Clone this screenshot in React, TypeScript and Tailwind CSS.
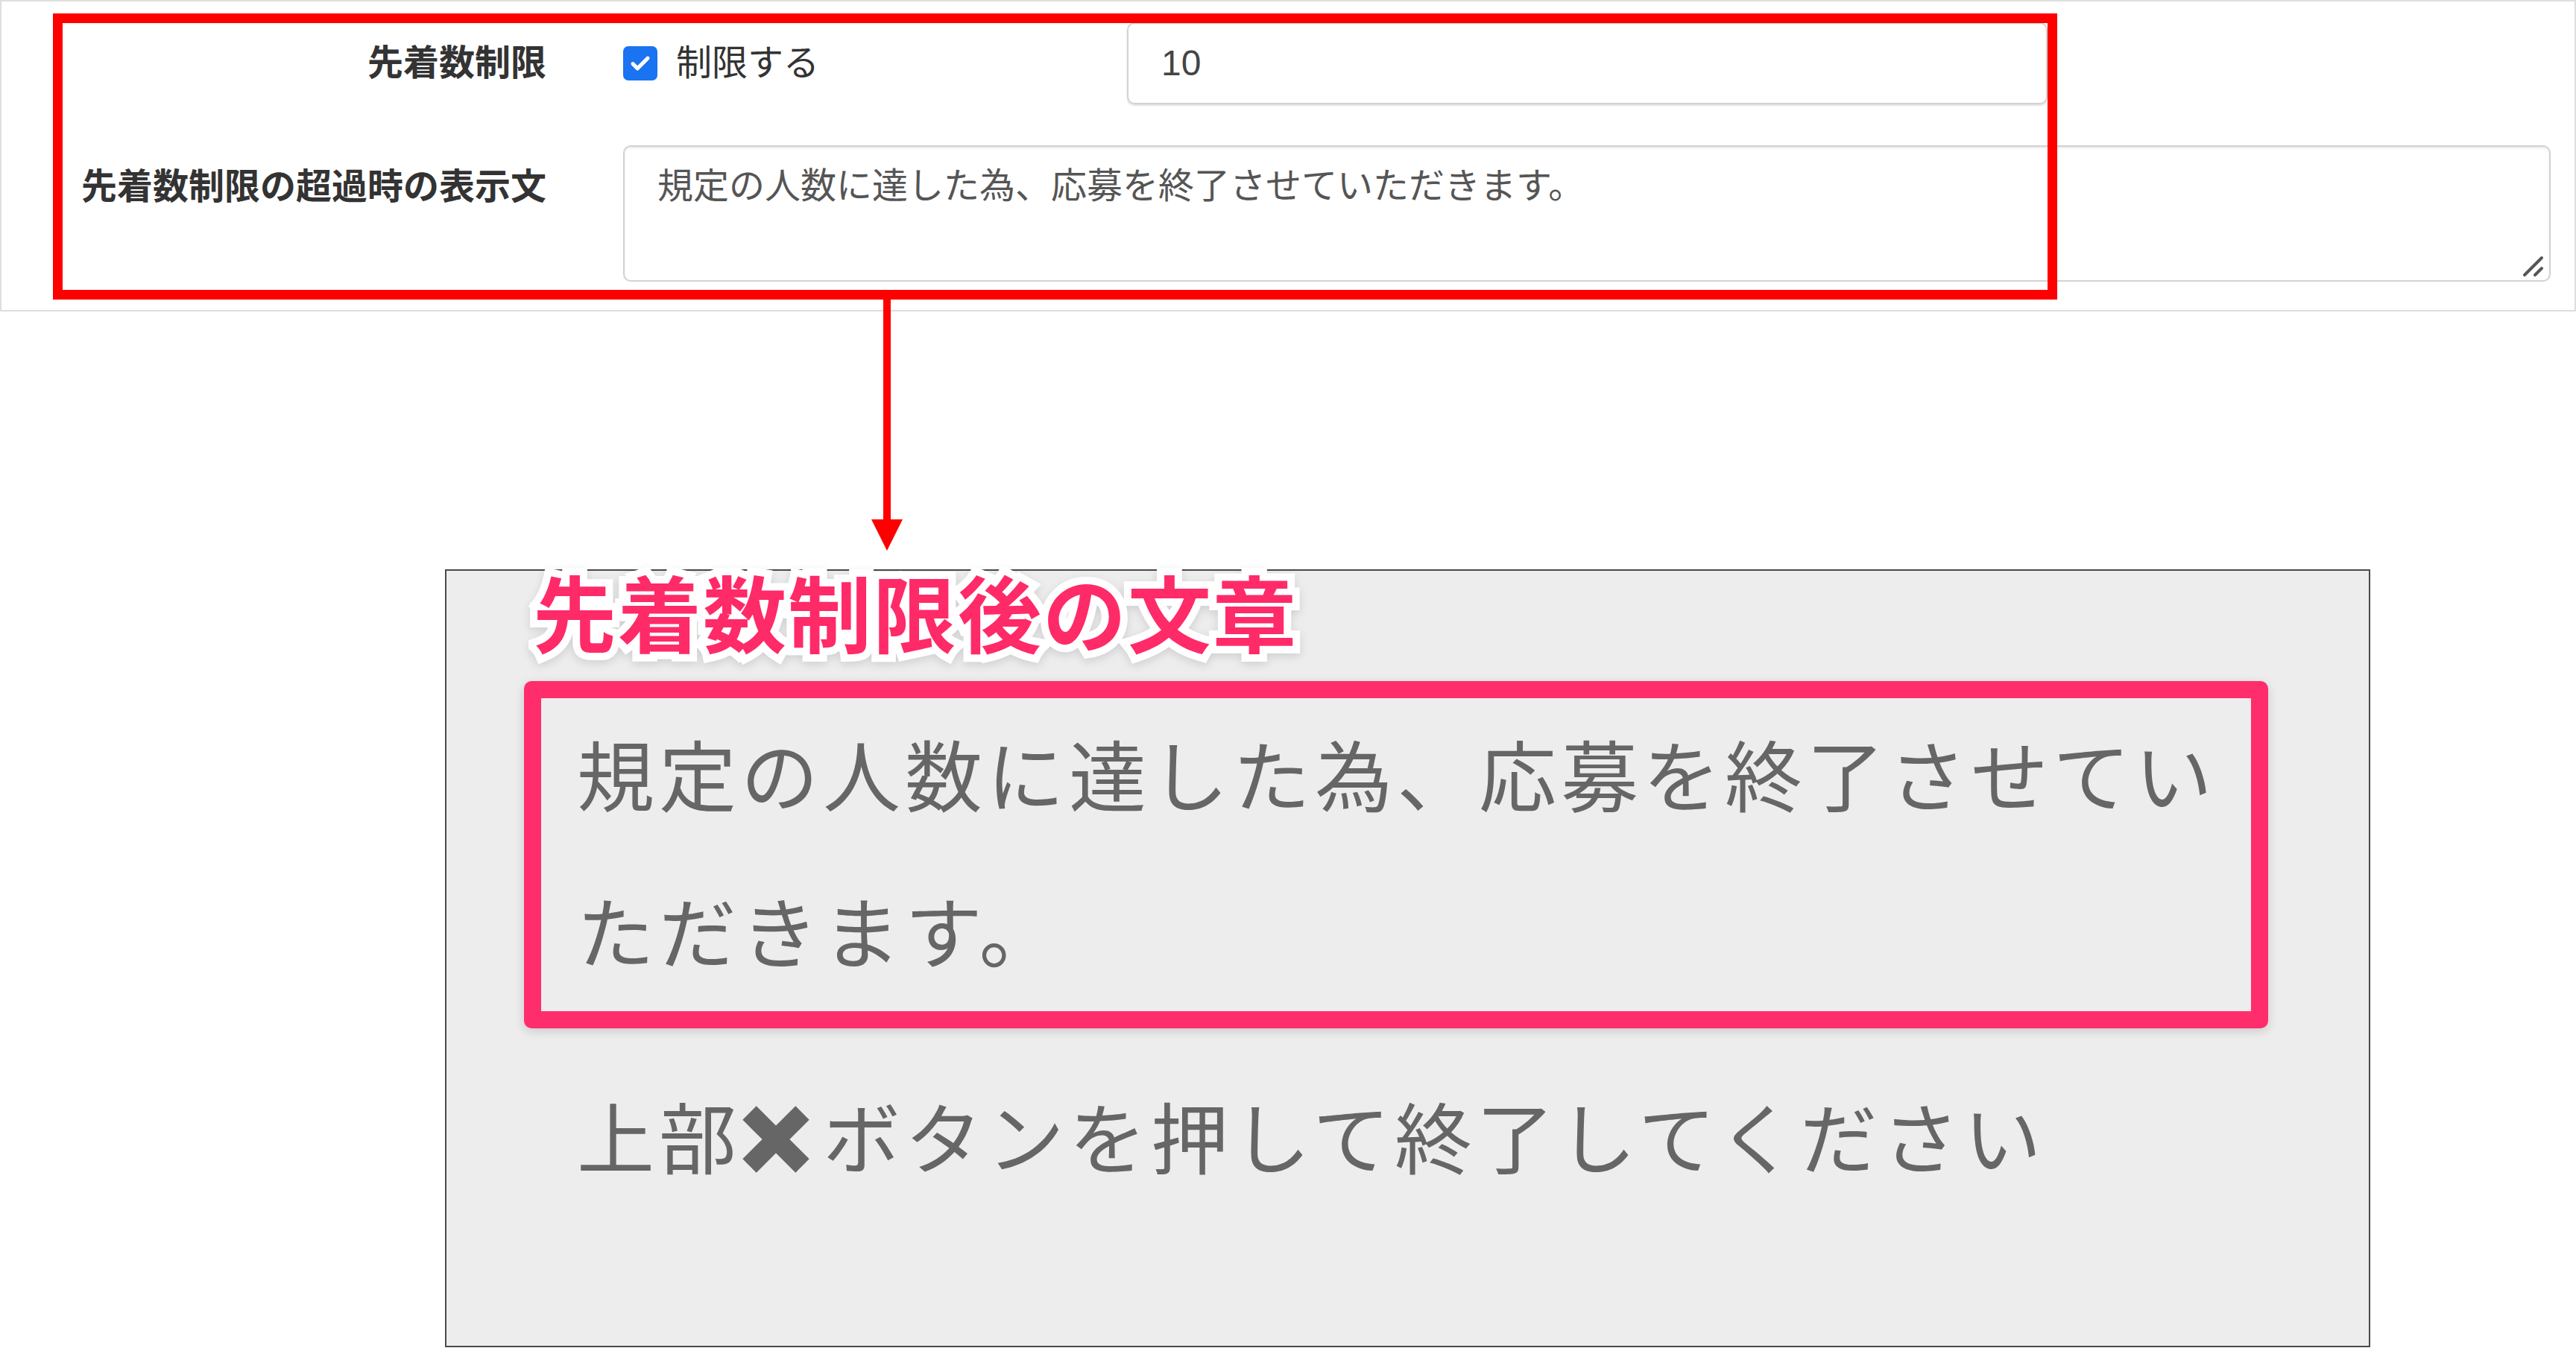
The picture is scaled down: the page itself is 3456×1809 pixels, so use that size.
import React from "react";

const jp = "font-['Liberation_Sans','Noto_Sans_CJK_JP',sans-serif]";

const CrossMark = () => (
  <span className="inline-block w-[110px] align-[-6px]" aria-label="✖">
    <svg width="90" height="90" viewBox="0 0 90 90" className="ml-[2px]">
      <line x1="9.5" y1="9.5" x2="80.5" y2="80.5" stroke="#666666" strokeWidth="26" />
      <line x1="80.5" y1="9.5" x2="9.5" y2="80.5" stroke="#666666" strokeWidth="26" />
    </svg>
  </span>
);

const SettingsPanel = () => (
  <div className="border-2 border-[#dedede] pt-[28px] pb-[38px]">
    <div className="grid grid-cols-[731px_1fr] gap-x-[103px] gap-y-[55px]">
      <div className="flex h-[110px] items-center justify-end text-[48px] font-bold text-[#333]">
        先着数制限
      </div>
      <div className="flex h-[110px] items-center">
        <div className="flex w-[676px] items-center gap-[25px]">
          <span className="flex h-[46px] w-[46px] items-center justify-center rounded-[7px] bg-[#1a73f0]">
            <svg width="30" height="30" viewBox="0 0 24 24">
              <path d="M4 12.5l5 5L20 6.5" fill="none" stroke="#fff" strokeWidth="4" strokeLinecap="round" strokeLinejoin="round" />
            </svg>
          </span>
          <span className="text-[48px] text-[#333]">制限する</span>
        </div>
        <div className="flex h-[110px] w-[1235px] items-center rounded-[10px] border-2 border-[#d2d2d2] pl-[44px] text-[48px] text-[#444] shadow-[0_2px_2px_rgba(0,0,0,0.12)]">
          10
        </div>
      </div>
      <div className="flex justify-end pt-[20px] text-[48px] font-bold leading-[72px] text-[#333]">
        先着数制限の超過時の表示文
      </div>
      <div className="relative h-[183px] w-[2586px] rounded-[10px] border-2 border-[#d2d2d2] pl-[44px] pt-[17px] text-[48px] leading-[72px] text-[#555] shadow-[inset_0_2px_3px_rgba(0,0,0,0.08)]">
        規定の人数に達した為、応募を終了させていただきます。
        <svg width="30" height="30" viewBox="0 0 30 30" className="absolute bottom-[4px] right-[6px]">
          <path d="M3 27L26 4M17 27L26 18" stroke="#555" strokeWidth="4" strokeLinecap="round" />
        </svg>
      </div>
    </div>
  </div>
);

const PreviewBox = () => (
  <div className="ml-[597px] mt-[346px] h-[1044px] w-[2583px] border-2 border-[#4a4a4a] bg-[#ededed]">
    <div className="mt-[8px] pl-[116px] text-[112px] font-bold leading-[112px] tracking-[2px] text-[#ff2a68] [-webkit-text-stroke:20px_white] [paint-order:stroke_fill] drop-shadow-[0_4px_6px_rgba(0,0,0,0.12)]">
      先着数制限後の文章
    </div>
    <div className="pl-[104px] pt-[28px]">
      <div className="h-[466px] w-[2340px] rounded-[10px] border-[23px] border-[#ff2d6b] pl-[48px] pt-[4px] text-[104px] leading-[210px] tracking-[6px] text-[#666] shadow-[0_4px_14px_rgba(0,0,0,0.15)]">
        規定の人数に達した為、応募を終了させてい
        <br />
        ただきます。
      </div>
      <div className="mt-[47px] pl-[71px] text-[104px] leading-[210px] tracking-[6px] text-[#666]">
        上部
        <CrossMark />
        ボタンを押して終了してください
      </div>
    </div>
  </div>
);

export default function App() {
  return (
    <div className={`relative h-[1809px] w-[3456px] overflow-hidden bg-white ${jp}`}>
      <SettingsPanel />
      <PreviewBox />

      {/* annotation: highlight + arrow */}
      <div className="pointer-events-none absolute left-[71px] top-[18px] h-[384px] w-[2689px] border-[13px] border-[#ff0000]" />
      <svg className="pointer-events-none absolute left-[1169px] top-[400px]" width="42" height="339" viewBox="0 0 42 339">
        <rect x="16" y="0" width="10" height="300" fill="#ff0000" />
        <polygon points="0,297 42,297 21,339" fill="#ff0000" />
      </svg>
    </div>
  );
}
